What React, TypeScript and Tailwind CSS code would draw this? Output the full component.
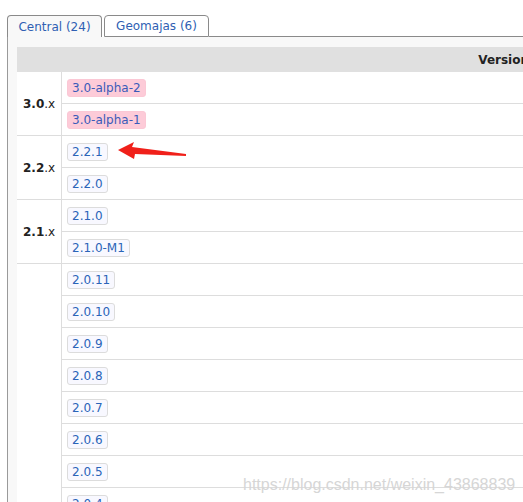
const FONT = { fontFamily: '"DejaVu Sans", Verdana, sans-serif' };

interface Group {
  label: string;
  versions: string[];
}

const GROUPS: Group[] = [
  { label: "3.0", versions: ["3.0-alpha-2", "3.0-alpha-1"] },
  { label: "2.2", versions: ["2.2.1", "2.2.0"] },
  { label: "2.1", versions: ["2.1.0", "2.1.0-M1"] },
  {
    label: "2.0",
    versions: [
      "2.0.11", "2.0.10", "2.0.9", "2.0.8", "2.0.7", "2.0.6", "2.0.5", "2.0.4", "2.0.3",
      "2.0.2", "2.0.1", "2.0.0", "2.0.0-RC2", "2.0.0-RC1", "2.0.0-M4", "2.0.0-M3", "2.0.0-M2", "2.0.0-M1",
    ],
  },
];

function Badge({ v }: { v: string }) {
  const alpha = v.includes("alpha");
  return (
    <span
      className={
        alpha
          ? "inline-block rounded-[3px] border border-[#fbc8d5] bg-[#fdcbd8] px-[4px] text-[12px] leading-[16px] text-[#3a5bb8]"
          : "inline-block rounded-[3px] border border-[#dcdcdc] bg-[#f8f8ff] px-[4px] text-[12px] leading-[16px] text-[#2a64b8]"
      }
    >
      {v}
    </span>
  );
}

export default function App() {
  return (
    <div className="relative h-[502px] w-[523px] overflow-hidden bg-white" style={FONT}>
      {/* tabs */}
      <div className="flex h-[37px] items-end pl-[7px] pt-[15px]">
        <div className="flex h-[22px] w-[95px] items-center justify-center rounded-t-[4px] border border-b-0 border-[#8a8a8a] bg-[#f8f8f8] text-[12px] text-[#2f5fb3]">
          Central (24)
        </div>
        <div className="ml-[2px] flex h-[22px] w-[105px] items-center justify-center rounded-t-[4px] border border-[#8a8a8a] bg-white text-[12px] text-[#2f5fb3]">
          Geomajas (6)
        </div>
        <div className="h-[22px] flex-1 border-b border-[#8a8a8a]" />
      </div>

      {/* panel */}
      <div className="ml-[7px] border-l border-[#9a9a9a] bg-[#f8f8f8] pl-[9px] pt-[10px]">
        <div className="w-[560px] bg-white">
          <div className="flex h-[25px] items-center justify-end bg-[#e0e0e0] pr-[48px] text-[12px] font-bold text-[#222]">
            Version
          </div>
          {GROUPS.map((g) => (
            <div key={g.label} className="flex">
              <div className="flex w-[45px] shrink-0 items-center border-r border-b border-[#dddddd] pl-[6px] text-[12px] text-[#222]">
                <span>
                  <b>{g.label}</b>.x
                </span>
              </div>
              <div className="flex-1">
                {g.versions.map((v) => (
                  <div key={v} className="flex h-[32px] items-center border-b border-[#dddddd] pl-[5px]">
                    <Badge v={v} />
                  </div>
                ))}
              </div>
            </div>
          ))}
        </div>
      </div>

      {/* red arrow annotation */}
      <svg className="absolute left-[116px] top-[140px]" width="72" height="22" viewBox="0 0 72 22">
        <polygon points="2,10 18,2 16,7 70,14 70,16 19,14 18,19" fill="#f0201a" />
      </svg>

      {/* watermark */}
      <div
        className="absolute left-[243px] top-[473px] text-[16px] text-[#d6d6d6]"
        style={{ fontFamily: '"Liberation Sans", Arial, sans-serif' }}
      >
        https://blog.csdn.net/weixin_43868839
      </div>
    </div>
  );
}
